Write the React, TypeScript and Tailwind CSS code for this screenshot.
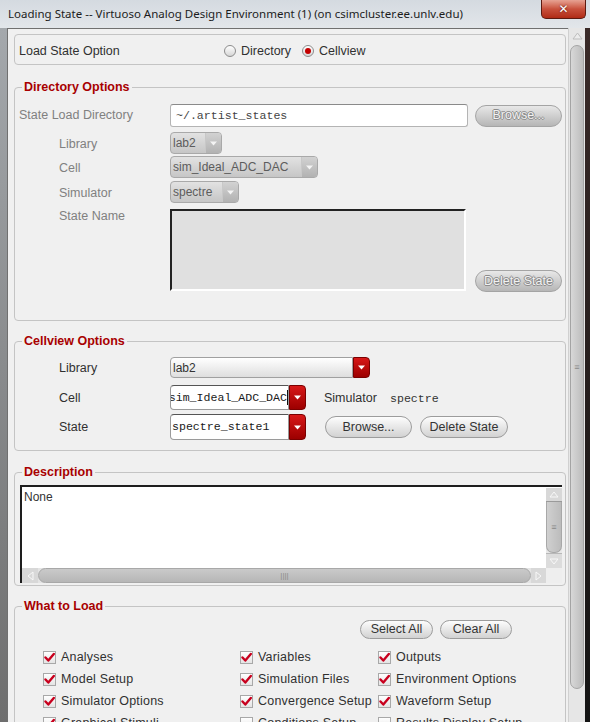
import React from 'react';

const SANS = "font-['Liberation_Sans',Arial,sans-serif]";
const MONO = "font-['Liberation_Mono','DejaVu_Sans_Mono',monospace]";

function Legend({ children }: { children: React.ReactNode }) {
  return (
    <legend className={`ml-[7px] px-[2px] text-[12.5px] font-bold leading-[16px] text-[#a80000] ${SANS}`}>
      {children}
    </legend>
  );
}

function Btn({ label, cls, disabled }: { label: string; cls: string; disabled?: boolean }) {
  return (
    <div
      className={`${cls} flex shrink-0 items-center justify-center rounded-full border text-[12.5px] ${SANS} ${
        disabled
          ? 'border-[#a4a4a4] bg-linear-to-b from-[#e8e8e8] to-[#b6b6b6] text-[#f2f2f2] [text-shadow:-1px_0_0_#8c8c8c,1px_0_0_#8c8c8c,0_-1px_0_#8c8c8c,0_1px_0_#8c8c8c]'
          : 'border-[#9c9c9c] bg-linear-to-b from-[#fdfdfd] to-[#d2d2d2] text-[#333]'
      }`}
    >
      {label}
    </div>
  );
}

function Tri({ color }: { color: string }) {
  return (
    <svg width="7" height="5" viewBox="0 0 7 5">
      <path d="M0 0.5 L7 0.5 L3.5 4.5 Z" fill={color} />
    </svg>
  );
}

function DisabledCombo({ text, cls }: { text: string; cls: string }) {
  return (
    <div className={`${cls} flex h-[22px] rounded-[4px] border border-[#a9a9a9] bg-linear-to-b from-[#e2e2e2] to-[#c6c6c6]`}>
      <div className={`flex flex-1 items-center pl-[2px] text-[12px] text-[#5c5c5c] ${SANS}`}>{text}</div>
      <div className="flex w-[16px] items-center justify-center rounded-r-[3px] border-l border-[#c8c8c8] bg-linear-to-b from-[#d2d2d2] to-[#b2b2b2]">
        <Tri color="#f4f4f4" />
      </div>
    </div>
  );
}

function RedArrow({ cls }: { cls: string }) {
  return (
    <div className={`${cls} flex w-[17px] shrink-0 items-center justify-center rounded-r-[4px] border border-[#7a0000] bg-linear-to-b from-[#d81818] to-[#9c0000]`}>
      <Tri color="#ffffff" />
    </div>
  );
}

function EditCombo({ text, cursor }: { text: string; cursor?: boolean }) {
  return (
    <div className="flex h-full w-[136px]">
      <div
        className={`flex min-w-0 flex-1 items-center overflow-hidden whitespace-nowrap rounded-l-[4px] border border-[#9a9a9a] border-t-[#555] bg-white text-[11.6px] text-[#1a1a1a] ${MONO} ${
          cursor ? 'justify-end' : 'pl-[1px]'
        }`}
      >
        <span className="shrink-0">{text}</span>
        {cursor && <span className="h-[15px] w-[1px] shrink-0 bg-[#111]" />}
      </div>
      <RedArrow cls="h-full" />
    </div>
  );
}

function Radio({ checked }: { checked?: boolean }) {
  return (
    <div className="flex h-[12px] w-[12px] items-center justify-center rounded-full border border-[#8c8c8c] bg-linear-to-b from-[#ffffff] to-[#d6d6d6]">
      {checked && <div className="h-[6px] w-[6px] rounded-full bg-[#c40000]" />}
    </div>
  );
}

function Check({ label, checked }: { label: string; checked?: boolean }) {
  return (
    <div className="flex h-[22px] items-center gap-[5px]">
      <div className="flex h-[13px] w-[13px] items-center justify-center border border-[#a8a8a8] bg-linear-to-b from-[#ffffff] to-[#e4e4e4]">
        {checked && (
          <svg width="11" height="11" viewBox="0 0 11 11">
            <path d="M1.5 5.5 L4.3 8.5 L9.8 2" stroke="#c8001e" strokeWidth="2.4" fill="none" strokeLinecap="round" strokeLinejoin="round" />
          </svg>
        )}
      </div>
      <span className={`text-[12.5px] tracking-[0.2px] text-[#303030] ${SANS}`}>{label}</span>
    </div>
  );
}

const checks: [string, boolean][] = [
  ['Analyses', true],
  ['Variables', true],
  ['Outputs', true],
  ['Model Setup', true],
  ['Simulation Files', true],
  ['Environment Options', true],
  ['Simulator Options', true],
  ['Convergence Setup', true],
  ['Waveform Setup', true],
  ['Graphical Stimuli', true],
  ['Conditions Setup', false],
  ['Results Display Setup', false],
];

export default function App() {
  return (
    <div className={`flex h-[722px] w-[590px] flex-col overflow-hidden bg-[#d3d9df] ${SANS}`}>
      {/* title bar */}
      <div className="relative flex h-[28px] shrink-0 items-start bg-linear-to-b from-[#d4dae0] to-[#e2e6ea] pl-[8px] pt-[5px]">
        <span className="font-['Noto_Sans',sans-serif] text-[11.5px] text-[#1c1c1c]">
          Loading State -- Virtuoso Analog Design Environment (1) (on csimcluster.ee.unlv.edu)
        </span>
        <div className="absolute right-[4px] top-0 flex h-[19px] w-[45px] items-center justify-center rounded-b-[5px] border border-t-0 border-[#5c1a10] bg-linear-to-b from-[#e6a293] via-[#c8503c] to-[#b02a14]">
          <span className="font-['DejaVu_Sans',sans-serif] text-[12px] font-bold leading-none text-white [text-shadow:0_0_2px_#400]">✕</span>
        </div>
      </div>

      <div className="flex min-h-0 flex-1">
        <div className="w-[7px] bg-linear-to-b from-[#a4a8ac] to-[#6e6e6e]" />

        {/* client */}
        <div className="w-[561px] border-l border-t border-[#707070] bg-[#f0f0f0] pl-[6px] pr-[2px] pt-[5px] text-[12.5px] text-[#303030]">
          {/* Load State Option */}
          <div className="flex h-[31px] items-center rounded-[4px] border border-[#c4c4c4] pl-[4px] pt-[3px]">
            <span className="w-[205px]">Load State Option</span>
            <Radio />
            <span className="ml-[5px] w-[61px]">Directory</span>
            <Radio checked />
            <span className="ml-[5px]">Cellview</span>
          </div>

          {/* Directory Options */}
          <fieldset className="mt-[14px] rounded-[4px] border border-[#c4c4c4]">
            <Legend>Directory Options</Legend>
            <div className="pb-[29px] pl-[4px] pr-[3px]">
              <div className="mt-[9px] flex h-[23px] items-center">
                <div className="w-[151px] text-[#808080]">State Load Directory</div>
                <div className={`flex h-[23px] w-[298px] items-center rounded-[3px] border border-[#b4b4b4] border-t-[#8a8a8a] bg-white pl-[5px] text-[11.6px] text-[#444] ${MONO}`}>
                  ~/.artist_states
                </div>
                <Btn label="Browse..." cls="ml-[7px] h-[22px] w-[87px]" disabled />
              </div>
              <div className="mt-[5px] flex h-[22px] items-center">
                <div className="w-[151px] pl-[40px] pt-[2px] text-[#808080]">Library</div>
                <DisabledCombo text="lab2" cls="w-[52px]" />
              </div>
              <div className="mt-[2px] flex h-[22px] items-center">
                <div className="w-[151px] pl-[40px] pt-[2px] text-[#808080]">Cell</div>
                <DisabledCombo text="sim_Ideal_ADC_DAC" cls="w-[148px]" />
              </div>
              <div className="mt-[3px] flex h-[22px] items-center">
                <div className="w-[151px] pl-[40px] pt-[2px] text-[#808080]">Simulator</div>
                <DisabledCombo text="spectre" cls="w-[69px]" />
              </div>
              <div className="mt-[6px] flex">
                <div className="w-[151px] pl-[40px] leading-[14px] text-[#808080]">State Name</div>
                <div className="h-[82px] w-[296px] border-2 border-b-white border-l-[#222] border-r-white border-t-[#222] bg-[#e0e0e0]" />
                <Btn label="Delete State" cls="ml-[9px] -mb-[1px] h-[22px] w-[87px] self-end" disabled />
              </div>
            </div>
          </fieldset>

          {/* Cellview Options */}
          <fieldset className="mt-[12px] rounded-[4px] border border-[#c4c4c4]">
            <Legend>Cellview Options</Legend>
            <div className="pb-[10px] pl-[4px] pr-[3px]">
              <div className="mt-[8px] flex h-[21px] items-center">
                <div className="w-[151px] pl-[40px] pt-[2px]">Library</div>
                <div className="flex h-full w-[200px]">
                  <div className="flex flex-1 items-center rounded-l-[4px] border border-[#a0a0a0] bg-linear-to-b from-[#ffffff] to-[#dedede] pl-[2px] text-[12px] text-[#333]">
                    lab2
                  </div>
                  <RedArrow cls="h-full" />
                </div>
              </div>
              <div className="mt-[7px] flex h-[25px] items-center">
                <div className="w-[151px] pl-[40px] pt-[1px]">Cell</div>
                <EditCombo text="sim_Ideal_ADC_DAC" cursor />
                <span className="ml-[18px] w-[66px] pt-[2px]">Simulator</span>
                <span className={`pt-[2px] text-[11.6px] text-[#333] ${MONO}`}>spectre</span>
              </div>
              <div className="mt-[4px] flex h-[26px] items-center">
                <div className="w-[151px] pl-[40px] pt-[1px]">State</div>
                <EditCombo text="spectre_state1" />
                <Btn label="Browse..." cls="ml-[19px] h-[22px] w-[87px]" />
                <Btn label="Delete State" cls="ml-[8px] h-[22px] w-[88px]" />
              </div>
            </div>
          </fieldset>

          {/* Description */}
          <fieldset className="mt-[13px] rounded-[4px] border border-[#c4c4c4]">
            <Legend>Description</Legend>
            <div className="pb-[2px] pl-[5px] pr-[3px]">
              <div className="mt-[5px] flex h-[98px] flex-col border-l-2 border-t-2 border-[#1e1e1e] bg-white">
                <div className="flex min-h-0 flex-1">
                  <div className="flex-1 pl-[2px] pt-[1px] text-[12px] text-[#333]">None</div>
                  <div className="mt-[1px] flex w-[16px] flex-col bg-[#e8e8e8]">
                    <div className="flex h-[14px] items-center justify-center border-b border-[#9a9a9a] bg-[#d8d8d8]">
                      <svg width="10" height="7" viewBox="0 0 10 7"><path d="M1 6 L5 1 L9 6 Z" fill="none" stroke="#f8f8f8" strokeWidth="1" /></svg>
                    </div>
                    <div className="flex flex-1 items-center justify-center rounded-b-[7px] border-x border-b border-[#a8a8a8] bg-linear-to-r from-[#d0d0d0] to-[#bcbcbc] text-[9px] leading-none text-[#888]">≡</div>
                    <div className="flex h-[15px] items-center justify-center border-t border-[#b8b8b8] bg-[#dcdcdc]">
                      <svg width="10" height="7" viewBox="0 0 10 7"><path d="M1 1 L5 6 L9 1 Z" fill="none" stroke="#f8f8f8" strokeWidth="1" /></svg>
                    </div>
                  </div>
                </div>
                <div className="flex h-[15px]">
                  <div className="flex flex-1 bg-[#e4e4e4]">
                    <div className="flex w-[16px] items-center justify-center bg-[#d8d8d8]">
                      <svg width="7" height="10" viewBox="0 0 7 10"><path d="M6 1 L1 5 L6 9 Z" fill="none" stroke="#f8f8f8" strokeWidth="1" /></svg>
                    </div>
                    <div className="flex flex-1 items-center justify-center rounded-full border border-[#a8a8a8] bg-linear-to-b from-[#cacaca] to-[#b6b6b6] text-[8px] leading-none text-[#8a8a8a]">||||</div>
                    <div className="flex w-[15px] items-center justify-center bg-[#d8d8d8]">
                      <svg width="7" height="10" viewBox="0 0 7 10"><path d="M1 1 L6 5 L1 9 Z" fill="none" stroke="#f8f8f8" strokeWidth="1" /></svg>
                    </div>
                  </div>
                  <div className="w-[16px] bg-[#eeeeee]" />
                </div>
              </div>
            </div>
          </fieldset>

          {/* What to Load */}
          <fieldset className="mt-[12px] rounded-[4px] border border-[#c4c4c4]">
            <Legend>What to Load</Legend>
            <div className="pb-[10px] pl-[28px]">
              <div className="mt-[6px] flex justify-end pr-[53px]">
                <Btn label="Select All" cls="h-[19px] w-[73px]" />
                <Btn label="Clear All" cls="ml-[7px] h-[19px] w-[72px]" />
              </div>
              <div className="mt-[7px] grid grid-cols-[197px_138px_1fr]">
                {checks.map(([l, c]) => (
                  <Check key={l} label={l} checked={c} />
                ))}
              </div>
            </div>
          </fieldset>
        </div>

        {/* main scrollbar */}
        <div className="flex w-[17px] flex-col border-l border-[#d0d0d0] bg-[#e6e6e6]">
          <div className="flex h-[16px] items-center justify-center">
            <svg width="11" height="8" viewBox="0 0 11 8"><path d="M1 7 L5.5 1 L10 7 Z" fill="#ececec" stroke="#bdbdbd" strokeWidth="1" /></svg>
          </div>
          <div className="mx-[1px] mt-[1px] flex h-[644px] items-center justify-center rounded-[7px] border border-[#a4a4a4] bg-linear-to-r from-[#d8d8d8] to-[#bcbcbc] text-[9px] leading-none text-[#8a8a8a]">
            ≡
          </div>
        </div>
        <div className="w-[5px] bg-linear-to-b from-[#3a2a28] to-[#141414]" />
      </div>
    </div>
  );
}
